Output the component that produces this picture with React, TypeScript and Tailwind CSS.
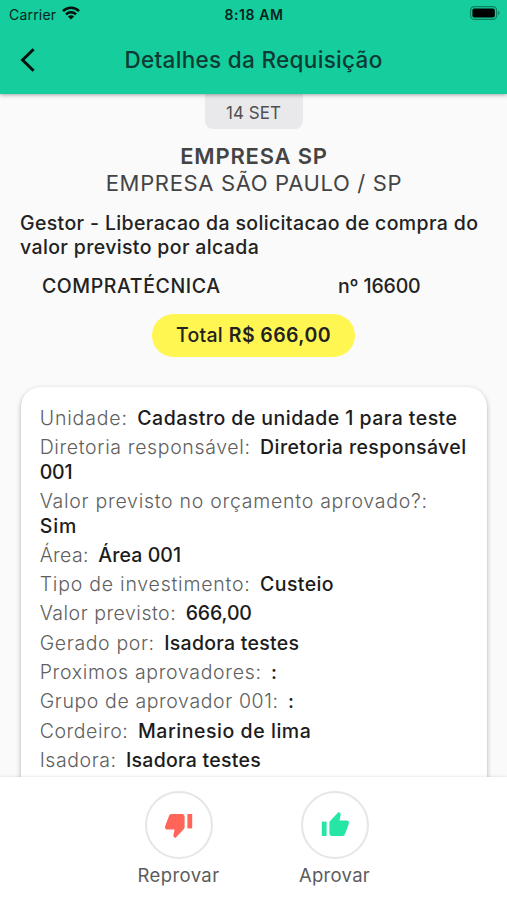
type Detail = {
  label: string;
  value: string;
  labelClass?: string;
  valueClass?: string;
  rest?: string;
  newLine?: boolean;
};

const details: Detail[] = [
  { label: 'Unidade:', value: 'Cadastro de unidade 1 para teste', labelClass: 'tracking-[0.85px]', valueClass: 'tracking-[0.46px]' },
  { label: 'Diretoria responsável:', value: 'Diretoria responsável', labelClass: 'tracking-[0.64px]', valueClass: 'tracking-[0.4px]', rest: '001' },
  { label: 'Valor previsto no orçamento aprovado?:', value: 'Sim', labelClass: 'tracking-[0.73px]', valueClass: 'tracking-[0.9px]', newLine: true },
  { label: 'Área:', value: 'Área 001', labelClass: 'tracking-[0.3px]', valueClass: 'tracking-[0.1px]' },
  { label: 'Tipo de investimento:', value: 'Custeio', labelClass: 'tracking-[0.77px]', valueClass: 'tracking-[0.4px]' },
  { label: 'Valor previsto:', value: '666,00', labelClass: 'tracking-[0.5px]', valueClass: 'tracking-[-0.1px]' },
  { label: 'Gerado por:', value: 'Isadora testes', labelClass: 'tracking-[0.63px]', valueClass: 'tracking-[0.27px]' },
  { label: 'Proximos aprovadores:', value: ':', labelClass: 'tracking-[0.68px]' },
  { label: 'Grupo de aprovador 001:', value: ':', labelClass: 'tracking-[0.6px]' },
  { label: 'Cordeiro:', value: 'Marinesio de lima', labelClass: 'tracking-[0.55px]', valueClass: 'tracking-[0.55px]' },
  { label: 'Isadora:', value: 'Isadora testes', labelClass: 'tracking-[0.55px]', valueClass: 'tracking-[0.27px]' },
];

const StatusBar = () => (
  <div className="grid h-7 grid-cols-3 items-center pl-2 pr-[7px] text-[14px] text-[#06241c]">
    <div className="flex items-center gap-[6px] pl-px">
      <span className="tracking-[0.2px]">Carrier</span>
      <svg width="18" height="14" viewBox="0 0 18 14" className="-mt-[2px]" fill="none" stroke="#04120e" strokeWidth="2.5">
        <path d="M1 5.1a11.4 11.4 0 0 1 16 0" />
        <path d="M4 8.3a7.1 7.1 0 0 1 10 0" />
        <path d="M9 13.6 5.9 10.5a4.4 4.4 0 0 1 6.2 0z" fill="#04120e" stroke="none" />
      </svg>
    </div>
    <div className="text-center font-semibold tracking-[0.6px]">8:18 AM</div>
    <div className="flex justify-end">
      <svg width="30" height="14" viewBox="0 0 30 14" className="-mt-[2px]">
        <rect x="0.6" y="0.6" width="26" height="12.8" rx="3.6" fill="none" stroke="#0b8160" strokeWidth="1.2" />
        <rect x="2.4" y="2.4" width="22.4" height="9.2" rx="1.8" fill="#000" />
        <path d="M28.2 4.8c1.8.8 1.8 3.6 0 4.4z" fill="#0b8160" />
      </svg>
    </div>
  </div>
);

const Thumb = ({ className }: { className: string }) => (
  <svg width="28" height="25" viewBox="0 0 28 25" fill="currentColor" className={className}>
    <path d="M.8 10.6h4.8V25H.8z" />
    <path d="M8.4 12c0-.9.3-1.6.9-2.2L17.6.9l1.5 1.2c.5.4.7 1 .5 1.6l-1.1 5.7h7.1c1.6 0 2.5 1.1 2.3 2.6l-.3 1.5-3.6 9.6c-.4 1.2-1.3 1.9-2.5 1.9H10.8c-1.4 0-2.4-1-2.4-2.4z" />
  </svg>
);

const DetailRow = ({ item }: { item: Detail }) => (
  <div className="whitespace-nowrap">
    <span className={`font-light text-[#606060] ${item.labelClass ?? ''}`}>{item.label}</span>
    {item.newLine && <br />}
    <span className={`font-medium text-[#1c1c1c] ${item.newLine ? '' : 'ml-[9.5px]'} ${item.valueClass ?? ''}`}>
      {item.value}
    </span>
    {item.rest && (
      <>
        <br />
        <span className="font-medium tracking-[-0.2px] text-[#1c1c1c]">{item.rest}</span>
      </>
    )}
  </div>
);

const App = () => {
  return (
    <div className="flex h-[900px] w-full flex-col overflow-hidden bg-[#fafafa] font-['Inter',sans-serif]">
      <header className="relative z-10 h-[94px] shrink-0 bg-[#15cd9d] shadow-[0_1px_4px_rgba(0,0,0,0.35)]">
        <StatusBar />
        <div className="grid h-16 grid-cols-[56px_1fr_56px] items-center">
          <button className="pl-[19px]" aria-label="Voltar">
            <svg width="18" height="26" viewBox="0 0 18 26" fill="none" stroke="#03110d" strokeWidth="3">
              <path d="M14.6 2.2 3.6 13l11 10.8" />
            </svg>
          </button>
          <h1 className="-mt-px text-center text-[22.5px] font-medium tracking-[0.32px] text-[#0d3b33]">Detalhes da Requisição</h1>
        </div>
      </header>

      <main className="flex min-h-0 flex-1 flex-col overflow-hidden">
        <div className="mx-auto flex h-[35px] w-[98px] shrink-0 items-center justify-center rounded-b-lg bg-[#e9e9ec] pt-1 text-[17px] text-[#505050]">
          14 SET
        </div>

        <div className="mt-[14px] pl-px text-center text-[22px] leading-[27px] text-[#444]">
          <h2 className="font-semibold tracking-[0.8px]">EMPRESA SP</h2>
          <p className="tracking-[0.65px]">EMPRESA SÃO PAULO / SP</p>
        </div>

        <p className="mt-[14px] whitespace-nowrap pl-[20px] text-[19.5px] font-medium leading-[24.4px] tracking-[0.36px] text-[#222]">
          Gestor - Liberacao da solicitacao de compra do
          <br />
          valor previsto por alcada
        </p>

        <div className="mt-[14px] grid grid-cols-2 text-center text-[19.5px] font-medium leading-[25px] text-[#222]">
          <span className="pl-[9px] tracking-[0.6px]">COMPRATÉCNICA</span>
          <span className="pr-[2px] tracking-[-0.15px]">nº 16600</span>
        </div>

        <div className="mx-auto mt-[15px] flex h-[43px] w-[203px] shrink-0 items-center justify-center gap-[6px] rounded-full bg-[#fff652] text-[19.5px] text-[#222]">
          <span className="font-medium tracking-[0.2px]">Total</span>
          <span className="font-semibold tracking-[0.4px]">R$ 666,00</span>
        </div>

        <section className="ml-[21px] mr-[20px] mt-[30px] flex h-[440px] shrink-0 flex-col gap-[4.9px] rounded-[20px] bg-white pl-[18.7px] pt-[19.3px] text-[19.5px] leading-[24.4px] shadow-[0_2px_5px_rgba(0,0,0,0.3)]">
          {details.map((item) => (
            <DetailRow key={item.label} item={item} />
          ))}
        </section>
      </main>

      <footer className="relative z-10 flex h-[123px] shrink-0 justify-center gap-[74px] bg-white pl-[6px] pt-[14px] text-[18.5px] text-[#5c5c5c] shadow-[0_0_3px_rgba(0,0,0,0.15)]">
        <button className="flex w-[82px] flex-col items-center">
          <span className="flex h-[68px] w-[68px] items-center justify-center rounded-full border-2 border-[#e6e6e6]">
            <Thumb className="mt-[2px] rotate-180 text-[#ff6558]" />
          </span>
          <span className="mt-[3px] tracking-[0.4px]">Reprovar</span>
        </button>
        <button className="flex w-[82px] flex-col items-center">
          <span className="flex h-[68px] w-[68px] items-center justify-center rounded-full border-2 border-[#e6e6e6]">
            <Thumb className="mb-[3px] text-[#25e6a4]" />
          </span>
          <span className="mt-[3px] tracking-[0.3px]">Aprovar</span>
        </button>
      </footer>
    </div>
  );
};

export default App;
